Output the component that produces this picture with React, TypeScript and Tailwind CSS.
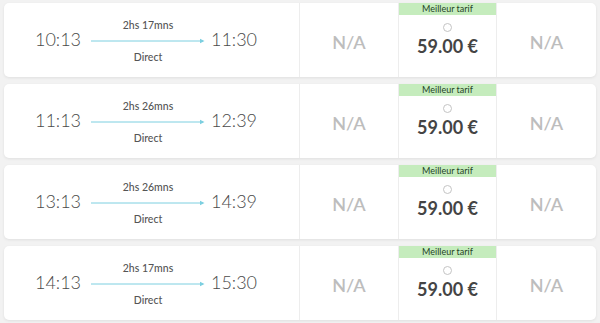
const trips = [
  { dep: '10:13', arr: '11:30', dur: '2hs 17mns' },
  { dep: '11:13', arr: '12:39', dur: '2hs 26mns' },
  { dep: '13:13', arr: '14:39', dur: '2hs 26mns' },
  { dep: '14:13', arr: '15:30', dur: '2hs 17mns' },
];

const Arrow = () => (
  <svg width="114" height="6" viewBox="0 0 114 6" className="block">
    <line x1="0" y1="3" x2="112" y2="3" stroke="#7ccfe0" strokeWidth="1" />
    <path d="M109 0.8 L113.5 3 L109 5.2 Z" fill="#7ccfe0" />
  </svg>
);

const TripRow = ({ dep, arr, dur }: { dep: string; arr: string; dur: string }) => (
  <div className="h-[74px] bg-white rounded-[5px] shadow-[0_1px_3px_rgba(0,0,0,0.08)] flex shrink-0 overflow-hidden">
    <div className="w-[295px] flex items-center">
      <div className="w-[66px] ml-[21px] text-center text-[18px] font-light text-[#4a4a4a] pb-[1px]">{dep}</div>
      <div className="w-[114px] h-full flex flex-col items-center pt-[15px]">
        <div className="h-[14px] leading-[14px] text-[10.5px] font-medium text-[#555]">{dur}</div>
        <div className="h-[18px] flex items-center">
          <Arrow />
        </div>
        <div className="h-[14px] leading-[14px] text-[10.5px] font-medium text-[#555]">Direct</div>
      </div>
      <div className="w-[58px] text-center text-[18px] font-light text-[#4a4a4a] pb-[1px]">{arr}</div>
    </div>
    <div className="w-[99px] border-l border-[#ededed] flex items-center justify-center pt-[4px] text-[18px] font-semibold text-[#bdbdbd]">
      N/A
    </div>
    <div className="w-[98px] border-l border-[#ededed] flex flex-col items-center">
      <div className="w-full h-[12px] bg-[#c5ecbd] text-[9px] leading-[12px] text-center text-[#264326]">Meilleur tarif</div>
      <div className="mt-[8px] w-[9px] h-[9px] rounded-full border border-[#c4c4c4]" />
      <div className="mt-[3px] text-[18px] leading-[22px] font-bold text-[#444]">59.00 €</div>
    </div>
    <div className="flex-1 border-l border-[#ededed] flex items-center justify-center pt-[4px] text-[18px] font-semibold text-[#bdbdbd]">
      N/A
    </div>
  </div>
);

export default function App() {
  return (
    <div className="w-[600px] h-[323px] bg-[#f2f2f2] px-[4px] pt-[3px] flex flex-col gap-[7px] overflow-hidden font-['Lato',sans-serif]">
      {trips.map((t) => (
        <TripRow key={t.dep} {...t} />
      ))}
    </div>
  );
}
